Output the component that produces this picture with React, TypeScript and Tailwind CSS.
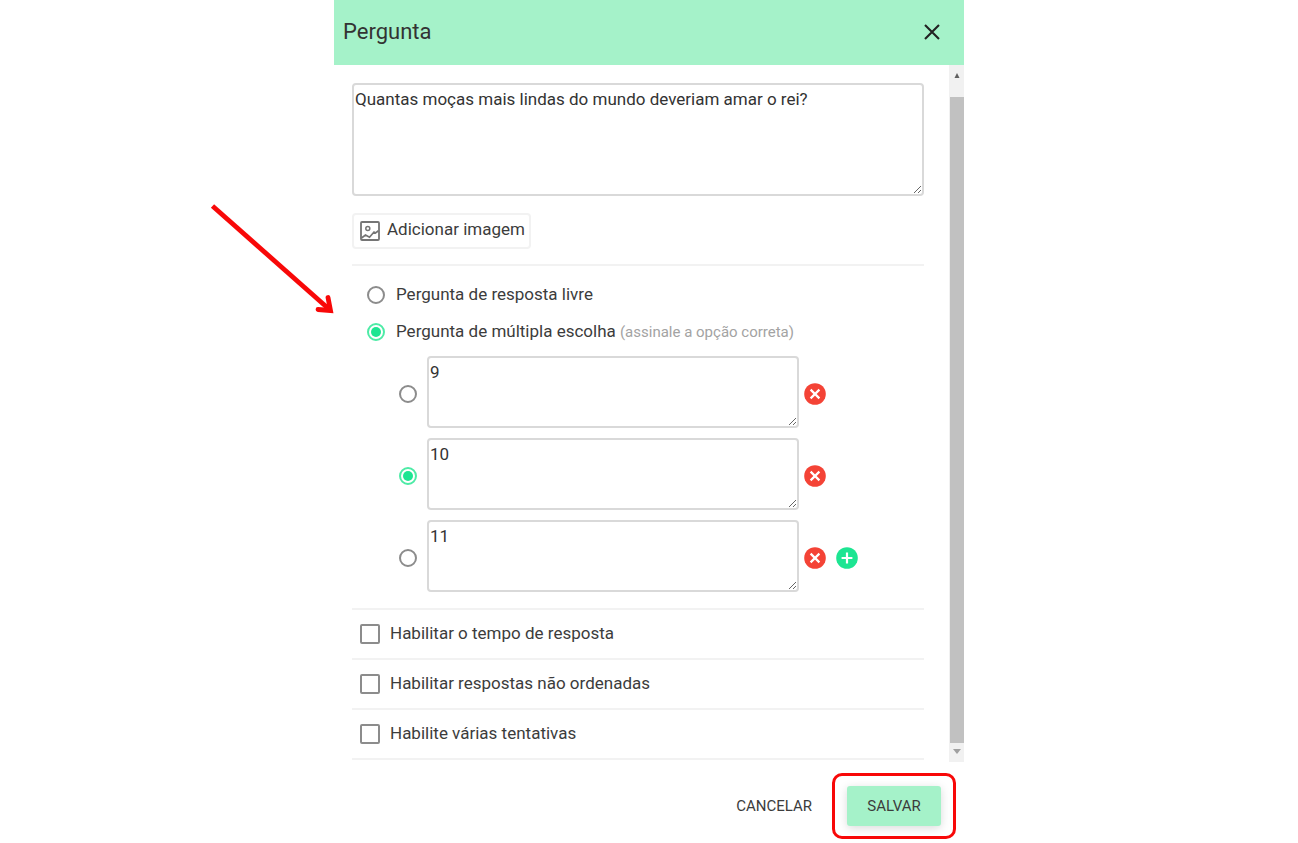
import { useState } from "react"

interface Answer {
  id: number
  text: string
}

const INITIAL_ANSWERS: Answer[] = [
  { id: 1, text: "9" },
  { id: 2, text: "10" },
  { id: 3, text: "11" },
]

const SETTINGS = [
  { id: "time", label: "Habilitar o tempo de resposta" },
  { id: "unordered", label: "Habilitar respostas não ordenadas" },
  { id: "attempts", label: "Habilite várias tentativas" },
]

const RADIO =
  "size-[18px] shrink-0 appearance-none rounded-full border-2 border-[#8c8c8c] bg-white bg-clip-content p-[2px] checked:border-[#4deba6] checked:bg-[#1de592]"

const TEXTAREA =
  "block resize rounded-[4px] border-2 border-[#d9d9d9] bg-white px-px py-[4px] text-[17px] leading-[21px] text-[#333] outline-none"

function ImageIcon() {
  return (
    <svg viewBox="0 0 20 20" className="size-5 shrink-0" fill="none" stroke="#757575" strokeWidth="1.8" aria-hidden="true">
      <rect x="1" y="1" width="18" height="18" rx="1" />
      <circle cx="7.8" cy="7.5" r="2" strokeWidth="1.5" />
      <path d="M1.5 17 L5.5 14 L9.5 16.2 L14 11 L15.5 12 L18.5 9.8" strokeWidth="1.7" />
    </svg>
  )
}

function RemoveIcon() {
  return (
    <svg viewBox="0 0 22 22" className="size-[22px]" aria-hidden="true">
      <circle cx="11" cy="11" r="10.8" fill="#f44336" />
      <path d="M6.6 6.6 L15.4 15.4 M15.4 6.6 L6.6 15.4" stroke="#fff" strokeWidth="2.2" />
    </svg>
  )
}

function AddIcon() {
  return (
    <svg viewBox="0 0 22 22" className="size-[22px]" aria-hidden="true">
      <circle cx="11" cy="11" r="10.8" fill="#1de592" />
      <path d="M11 5.6 V16.4 M5.6 11 H16.4" stroke="#fff" strokeWidth="2.2" />
    </svg>
  )
}

function Scrollbar() {
  return (
    <div className="flex w-[15px] shrink-0 flex-col bg-[#f1f1f1] pl-px" aria-hidden="true">
      <div className="flex h-8 justify-center pt-2">
        <svg viewBox="0 0 6 5" className="h-[5px] w-[6px]">
          <path d="M3 0 L5.5 5 H0.5 Z" fill="#606060" />
        </svg>
      </div>
      <div className="flex-1 bg-[#c1c1c1]" />
      <div className="flex h-[19px] justify-center pt-[6px]">
        <svg viewBox="0 0 8 5" className="h-[5px] w-2">
          <path d="M0 0 H8 L4 5 Z" fill="#a0a0a0" />
        </svg>
      </div>
    </div>
  )
}

export default function App() {
  const [question, setQuestion] = useState("Quantas moças mais lindas do mundo deveriam amar o rei?")
  const [type, setType] = useState("multiple")
  const [answers, setAnswers] = useState<Answer[]>(INITIAL_ANSWERS)
  const [correct, setCorrect] = useState(2)

  const updateAnswer = (id: number, text: string) => {
    setAnswers(answers.map(a => (a.id === id ? { ...a, text } : a)))
  }

  const removeAnswer = (id: number) => {
    setAnswers(answers.filter(a => a.id !== id))
  }

  const addAnswer = () => {
    setAnswers([...answers, { id: Date.now(), text: "" }])
  }

  return (
    <div className="min-h-screen bg-white font-['Roboto',sans-serif] text-[#3c3c3c]">
      <div className="relative mx-auto max-w-[630px]">
        {/* Pointer to the question type */}
        <svg viewBox="0 0 130 120" className="absolute top-[200px] right-full h-[120px] w-[130px]" fill="none" stroke="#f80808" aria-hidden="true">
          <path d="M8.5 6 L126 110" strokeWidth="4.8" />
          <path d="M124 97.5 L126.5 110.5 L114 109.5" strokeWidth="4.8" strokeLinecap="round" strokeLinejoin="miter" />
        </svg>

        {/* Header */}
        <header className="flex h-[65px] items-center justify-between bg-[#a5f2c9] pr-5 pb-[2px] pl-[9px]">
          <h1 className="text-[22px] leading-7 text-[#333]">Pergunta</h1>
          <button type="button" aria-label="Fechar" className="p-1">
            <svg viewBox="0 0 16 16" className="size-4" stroke="#222" strokeWidth="2.1" aria-hidden="true">
              <path d="M1 1 L15 15 M15 1 L1 15" />
            </svg>
          </button>
        </header>

        {/* Body */}
        <div className="flex">
          <main className="flex-1 pt-[18px] pr-[25px] pb-[2px] pl-[18px]">
            <textarea
              aria-label="Pergunta"
              value={question}
              onChange={(e) => setQuestion(e.target.value)}
              className={`${TEXTAREA} h-[113px] w-full`}
            />

            <button type="button" className="mt-[17px] flex h-9 items-center gap-[7px] rounded-[4px] border-2 border-[#f2f2f2] pr-1 pl-[6px] text-[17px]">
              <ImageIcon />
              <span className="pb-[2px]">Adicionar imagem</span>
            </button>

            <fieldset className="mt-[15px] border-t-2 border-[#f2f2f2] pt-[10px]">
              <label className="flex h-[37px] items-center gap-[11px] pl-[15px] text-[17px]">
                <input type="radio" name="type" className={RADIO} checked={type === "free"} onChange={() => setType("free")} />
                Pergunta de resposta livre
              </label>
              <label className="flex h-[37px] items-center gap-[11px] pl-[15px] text-[17px]">
                <input type="radio" name="type" className={RADIO} checked={type === "multiple"} onChange={() => setType("multiple")} />
                <span>
                  Pergunta de múltipla escolha{" "}
                  <span className="text-[15px] text-[#a3a3a3]">(assinale a opção correta)</span>
                </span>
              </label>

              <div className="mt-[6px] space-y-[10px] pl-[47px]">
                {answers.map((answer, index) => (
                  <div key={answer.id} className="flex items-center">
                    <input
                      type="radio"
                      name="correct"
                      aria-label={`Opção correta ${index + 1}`}
                      className={`${RADIO} mt-1`}
                      checked={correct === answer.id}
                      onChange={() => setCorrect(answer.id)}
                    />
                    <textarea
                      aria-label={`Opção ${index + 1}`}
                      value={answer.text}
                      onChange={(e) => updateAnswer(answer.id, e.target.value)}
                      className={`${TEXTAREA} ml-[10px] h-[72px] w-[372px]`}
                    />
                    <button type="button" aria-label="Remover opção" className="mt-1 ml-[5px]" onClick={() => removeAnswer(answer.id)}>
                      <RemoveIcon />
                    </button>
                    {index === answers.length - 1 && (
                      <button type="button" aria-label="Adicionar opção" className="mt-1 ml-[10px]" onClick={addAnswer}>
                        <AddIcon />
                      </button>
                    )}
                  </div>
                ))}
              </div>
            </fieldset>

            {/* Settings */}
            <div className="mt-4 border-t-2 border-[#f2f2f2]">
              {SETTINGS.map(setting => (
                <label key={setting.id} className="flex h-[50px] items-center gap-[10px] border-b-2 border-[#f2f2f2] pl-2 text-[17px]">
                  <input type="checkbox" name={setting.id} className="size-5 shrink-0 appearance-none rounded-[2px] border-2 border-[#8c8c8c] bg-white checked:bg-[#1de592]" />
                  {setting.label}
                </label>
              ))}
            </div>
          </main>
          <Scrollbar />
        </div>

        {/* Footer */}
        <footer className="flex items-center justify-end gap-[10px] pt-[11px] pr-2 pb-1">
          <button type="button" className="h-10 px-[10px] text-[15px]">CANCELAR</button>
          <div className="rounded-[10px] border-3 border-[#f80808] px-3 py-[10px]">
            <button type="button" className="block h-10 w-[94px] rounded-[3px] bg-[#a5f2c9] text-[15px] shadow-[0_2px_10px_rgba(0,0,0,0.15)]">
              SALVAR
            </button>
          </div>
        </footer>
      </div>
    </div>
  )
}
